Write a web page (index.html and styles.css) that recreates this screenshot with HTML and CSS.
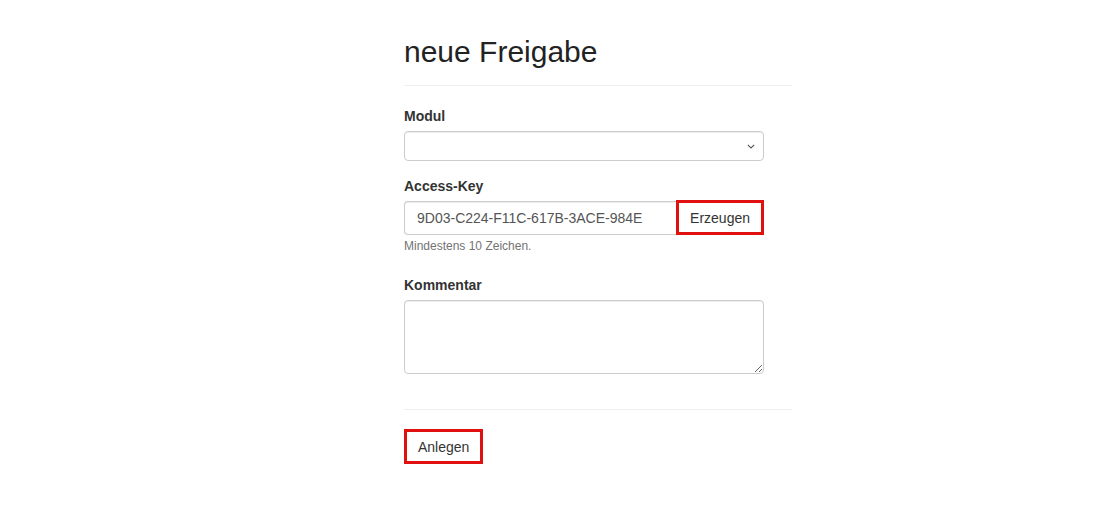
FILE: index.html
```html
<html>
	<head>
		<link rel="stylesheet" href="styles.css">
	</head>
	<body>
		<div id="page">
			<h1 class="page-title">neue Freigabe</h1>
			<hr>
			<form class="share-form">
				<div class="form-group">
					<label for="modul">Modul</label>
					<div class="select-wrap">
						<select id="modul" class="form-control">
							<option></option>
						</select>
						<svg class="select-caret" width="8" height="5" viewBox="0 0 8 5">
							<path d="M0.8 0.8 L4 4 L7.2 0.8" fill="none" stroke="#555" stroke-width="1.1"/>
						</svg>
					</div>
				</div>
				<div class="form-group">
					<label for="access-key">Access-Key</label>
					<div class="input-group">
						<input id="access-key" class="form-control key-input" type="text" value="9D03-C224-F11C-617B-3ACE-984E">
						<button type="button" class="btn btn-marked">Erzeugen</button>
					</div>
					<div class="help-block">Mindestens 10 Zeichen.</div>
				</div>
				<div class="form-group">
					<label for="kommentar">Kommentar</label>
					<textarea id="kommentar" class="form-control"></textarea>
				</div>
				<hr class="form-sep">
				<button type="button" class="btn btn-marked">Anlegen</button>
			</form>
		</div>
	</body>
</html>
```
FILE: styles.css
```css
body {
	margin: 0;
	background-color: #fff;
	font-family: "Liberation Sans", Arial, sans-serif;
	font-size: 14px;
	color: #333;
}

#page {
	width: 388px;
	margin-left: 404px;
	padding-top: 35px;
}

.page-title {
	margin: 0;
	font-size: 30px;
	font-weight: normal;
	line-height: 33px;
	color: #222;
}

hr {
	margin: 17px 0 20px 0;
	border: 0;
	border-top: 1px solid #eee;
}

.form-group {
	margin-bottom: 15px;
}

label {
	display: block;
	margin-bottom: 5px;
	font-weight: bold;
	line-height: 20px;
}

.form-control {
	box-sizing: border-box;
	width: 360px;
	height: 30px;
	padding: 6px 12px;
	font-family: inherit;
	font-size: 14px;
	color: #555;
	background-color: #fff;
	border: 1px solid #ccc;
	border-radius: 4px;
	box-shadow: inset 0 1px 1px rgba(0,0,0,.075);
	outline: none;
}

.select-wrap {
	position: relative;
	width: 360px;
}

select.form-control {
	display: block;
	padding: 4px 8px;
	appearance: none;
	-webkit-appearance: none;
}

.select-caret {
	position: absolute;
	right: 9px;
	top: 13px;
}

.input-group {
	display: flex;
	width: 360px;
	height: 34px;
}

.key-input {
	flex: 1;
	height: 34px;
	border-right: 0;
	border-radius: 4px 0 0 4px;
}

.help-block {
	margin-top: 4px;
	margin-bottom: 21px;
	font-size: 12px;
	line-height: 15px;
	color: #737373;
}

textarea.form-control {
	display: block;
	height: 74px;
	resize: both;
}

.form-group:last-of-type {
	margin-bottom: 0;
}

.form-sep {
	margin: 35px 0 19px 0;
}

.btn {
	box-sizing: border-box;
	height: 35px;
	padding: 0 11px;
	font-family: inherit;
	font-size: 14px;
	color: #333;
	background-color: #fff;
	cursor: pointer;
}

.btn-marked {
	border: 3px solid #e01010;
	border-radius: 0;
}

.input-group .btn-marked {
	margin-top: -1px;
}
```
